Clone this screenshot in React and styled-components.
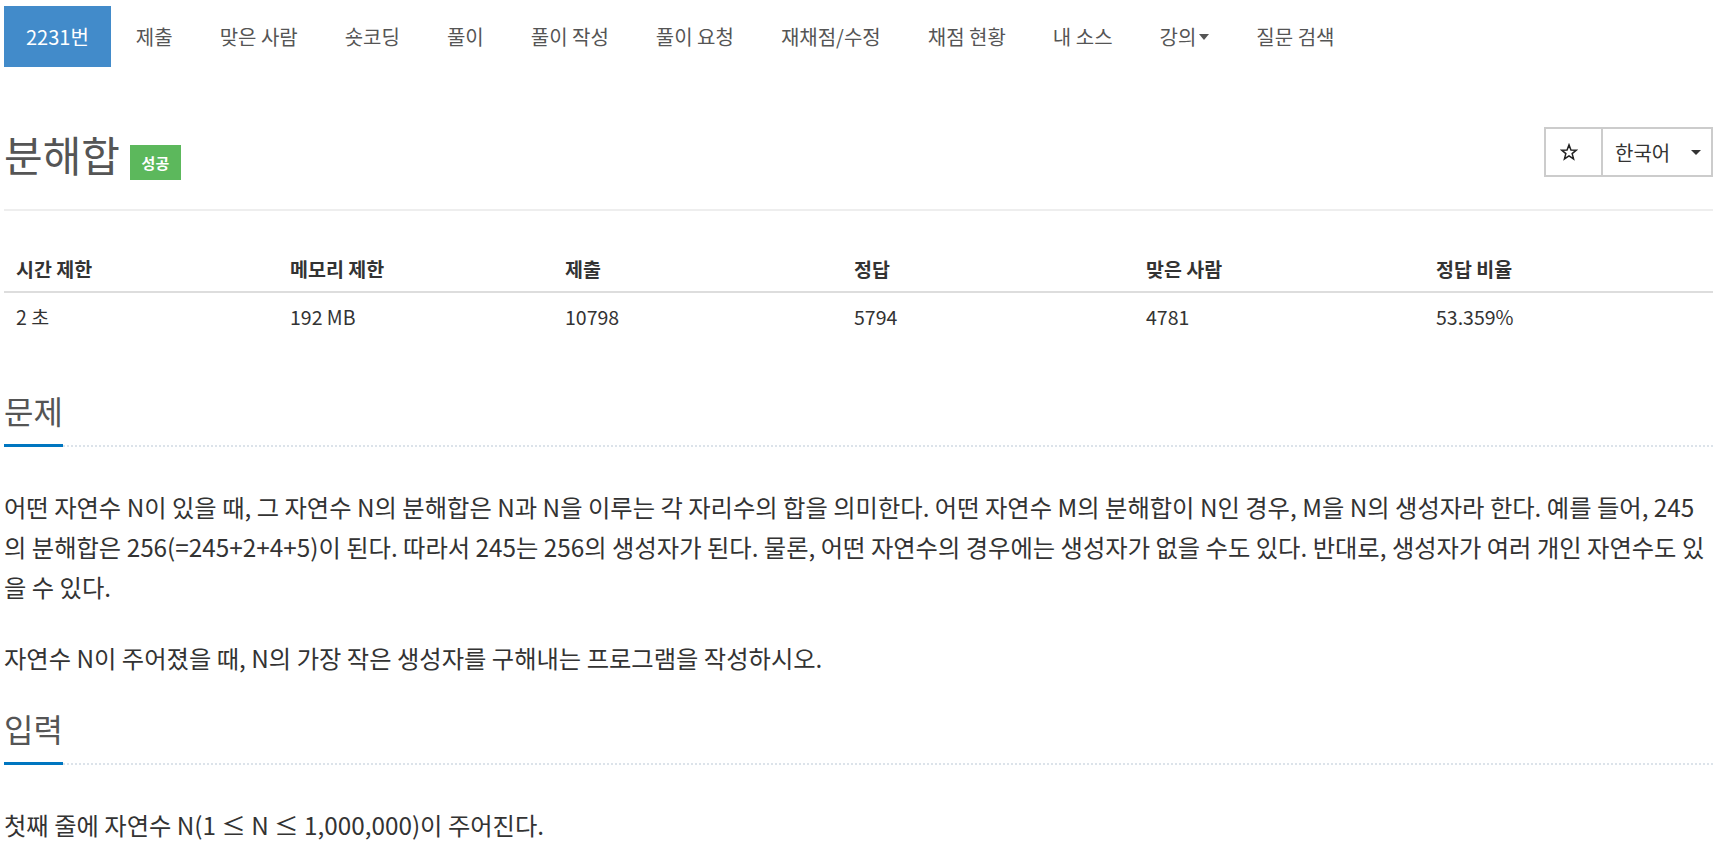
import React from "react";
import styled, { createGlobalStyle } from "styled-components";

const GlobalStyle = createGlobalStyle`
  html, body { margin: 0; padding: 0; background: #fff; }
  body {
    font-family: "Noto Sans CJK KR", "Open Sans", sans-serif;
    color: #333;
  }
  * { box-sizing: border-box; }
`;

const Page = styled.div`
  width: 1713px;
  padding: 6px 0 0 4px;
`;

const Nav = styled.ul`
  display: flex;
  list-style: none;
  margin: 0;
  padding: 0;
  gap: 3px;
`;

const NavLink = styled.a`
  display: flex;
  align-items: center;
  height: 61px;
  padding: 0 22px;
  font-size: 20px;
  color: ${(p) => (p.$active ? "#fff" : "#555")};
  background: ${(p) => (p.$active ? "#428bca" : "transparent")};
  text-decoration: none;
  white-space: nowrap;
`;

const SmallCaret = styled.span`
  display: inline-block;
  margin-left: 3px;
  border-top: 6px solid #555;
  border-left: 5px solid transparent;
  border-right: 5px solid transparent;
`;

const TitleRow = styled.div`
  display: flex;
  justify-content: space-between;
  align-items: flex-start;
  margin-top: 60px;
`;

const TitleGroup = styled.div`
  display: flex;
  align-items: center;
  gap: 10px;
`;

const Title = styled.h1`
  margin: 0;
  font-size: 42px;
  font-weight: 400;
  line-height: 50px;
  color: #555;
`;

const Badge = styled.span`
  display: inline-flex;
  align-items: center;
  justify-content: center;
  width: 51px;
  height: 35px;
  margin-top: 18px;
  background: #5cb85c;
  color: #fff;
  font-size: 15px;
  font-weight: 700;
`;

const BtnGroup = styled.div`
  display: flex;
`;

const Btn = styled.button`
  display: flex;
  align-items: center;
  justify-content: ${(p) => (p.$wide ? "space-between" : "center")};
  width: ${(p) => (p.$wide ? "112px" : "59px")};
  height: 50px;
  padding: 0 10px 0 ${(p) => (p.$wide ? "12px" : "0")};
  margin-left: ${(p) => (p.$wide ? "-2px" : "0")};
  border: 2px solid #ccc;
  background: #fff;
  color: #333;
  font-family: inherit;
  font-size: 20px;
  cursor: pointer;
`;

const Caret = styled.span`
  display: inline-block;
  border-top: 5px solid #333;
  border-left: 5px solid transparent;
  border-right: 5px solid transparent;
`;

const Rule = styled.div`
  margin-top: 29px;
  border-top: 2px solid #eee;
`;

const Table = styled.div`
  margin-top: 36px;
  display: grid;
  grid-template-columns: 274fr 275fr 289fr 292fr 290fr 289fr;
  font-size: 19.5px;
`;

const Th = styled.div`
  padding: 11px 12px 11px;
  line-height: 22px;
  font-weight: 700;
  color: #333;
  border-bottom: 2px solid #ddd;
`;

const Td = styled.div`
  padding: 13px 12px 13px;
  line-height: 22px;
  color: #333;
`;

const Headline = styled.div`
  margin-top: ${(p) => p.$top};
  border-bottom: 2px dotted #dce3ea;
  display: flex;
`;

const HeadTitle = styled.h2`
  margin: 0 0 -2px;
  padding-bottom: 15px;
  font-size: 32px;
  font-weight: 400;
  line-height: 38px;
  color: #555;
  border-bottom: 3px solid #0076c0;
`;

const Text = styled.div`
  margin-top: 40px;
  font-size: 24.3px;
  line-height: 40px;
  color: #333;
  p { margin: 0 0 31px; }
  p:last-child { margin-bottom: 0; }
`;

const Star = () => (
  <svg width="18" height="18" viewBox="0 0 24 24" fill="none" stroke="#222" strokeWidth="2" strokeLinejoin="miter">
    <polygon points="12,2.5 14.6,9.3 21.8,9.6 16.2,14.1 18.1,21.2 12,17.1 5.9,21.2 7.8,14.1 2.2,9.6 9.4,9.3" />
  </svg>
);

const navItems = [
  "제출",
  "맞은 사람",
  "숏코딩",
  "풀이",
  "풀이 작성",
  "풀이 요청",
  "재채점/수정",
  "채점 현황",
  "내 소스",
  "강의",
  "질문 검색",
];

const headers = ["시간 제한", "메모리 제한", "제출", "정답", "맞은 사람", "정답 비율"];
const values = ["2 초", "192 MB", "10798", "5794", "4781", "53.359%"];

export default function App() {
  return (
    <>
      <GlobalStyle />
      <Page>
        <Nav>
          <li>
            <NavLink $active>2231번</NavLink>
          </li>
          {navItems.map((n) => (
            <li key={n}>
              <NavLink>
                {n}
                {n === "강의" && <SmallCaret />}
              </NavLink>
            </li>
          ))}
        </Nav>

        <TitleRow>
          <TitleGroup>
            <Title>분해합</Title>
            <Badge>성공</Badge>
          </TitleGroup>
          <BtnGroup>
            <Btn>
              <Star />
            </Btn>
            <Btn $wide>
              한국어 <Caret />
            </Btn>
          </BtnGroup>
        </TitleRow>
        <Rule />

        <Table>
          {headers.map((h) => (
            <Th key={h}>{h}</Th>
          ))}
          {values.map((v) => (
            <Td key={v}>{v}</Td>
          ))}
        </Table>

        <section>
          <Headline $top="50px">
            <HeadTitle>문제</HeadTitle>
          </Headline>
          <Text>
            <p>
              어떤 자연수 N이 있을 때, 그 자연수 N의 분해합은 N과 N을 이루는 각 자리수의 합을 의미한다. 어떤 자연수 M의 분해합이 N인 경우, M을 N의 생성자라 한다. 예를 들어, 245의 분해합은 256(=245+2+4+5)이 된다. 따라서 245는 256의 생성자가 된다. 물론, 어떤 자연수의 경우에는 생성자가 없을 수도 있다. 반대로, 생성자가 여러 개인 자연수도 있을 수 있다.
            </p>
            <p>자연수 N이 주어졌을 때, N의 가장 작은 생성자를 구해내는 프로그램을 작성하시오.</p>
          </Text>
        </section>

        <section>
          <Headline $top="31px">
            <HeadTitle>입력</HeadTitle>
          </Headline>
          <Text>
            <p>첫째 줄에 자연수 N(1 ≤ N ≤ 1,000,000)이 주어진다.</p>
          </Text>
        </section>
      </Page>
    </>
  );
}
